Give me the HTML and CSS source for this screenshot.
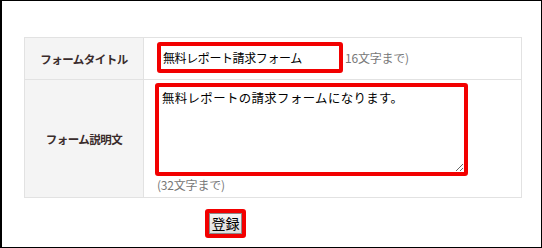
FILE: index.html
```html
<!DOCTYPE html>
<html lang="ja">
<head>
<meta charset="utf-8">
<link rel="stylesheet" href="styles.css">
</head>
<body>
<div class="frame">
  <table class="form-table">
    <tr class="row-title">
      <th class="label">フォームタイトル</th>
      <td class="field">
        <div class="inline">
          <input class="text-input" type="text" value="無料レポート請求フォーム">
          <span class="note note-inline">16文字まで)</span>
        </div>
      </td>
    </tr>
    <tr class="row-desc">
      <th class="label">フォーム説明文</th>
      <td class="field">
        <div class="desc-wrap">
          <textarea class="text-area">無料レポートの請求フォームになります。</textarea>
          <div class="note note-below">(32文字まで)</div>
        </div>
      </td>
    </tr>
  </table>
  <div class="actions">
    <button class="submit" type="button">登録</button>
  </div>
</div>
</body>
</html>
```

FILE: styles.css
```css
html, body {
  margin: 0;
  padding: 0;
  background: #fff;
}
.frame {
  width: 542px;
  height: 248px;
  box-sizing: border-box;
  border: 1px solid #000;
  border-left-width: 2px;
  padding: 36px 0 0 22px;
  font-family: "Noto Sans CJK JP", "Noto Sans", sans-serif;
}
.form-table {
  border-collapse: collapse;
  width: 498px;
  table-layout: fixed;
}
.form-table th, .form-table td {
  border: 1px solid #e2e2e2;
  padding: 0;
}
.form-table .label {
  width: 118px;
  background: #f4f4f4;
  font-size: 11.5px;
  font-weight: bold;
  color: #3a2c2c;
  text-align: center;
  vertical-align: middle;
  letter-spacing: -0.5px;
}
.row-title { height: 42px; }
.row-desc { height: 118px; }
.form-table .field {
  vertical-align: top;
  background: #fff;
}
.inline {
  display: flex;
  align-items: center;
  padding: 4px 0 0 13px;
}
.text-input {
  box-sizing: border-box;
  width: 186px;
  height: 31px;
  border: 4px solid #f20000;
  border-radius: 3px;
  padding: 0 0 0 2px;
  margin: 0;
  font-family: "Noto Sans CJK JP", sans-serif;
  font-size: 12px;
  letter-spacing: -0.4px;
  color: #000;
  outline: none;
}
.note {
  font-size: 12px;
  color: #777;
  letter-spacing: -0.2px;
}
.note-inline {
  margin-left: 2px;
}
.desc-wrap {
  padding: 3px 0 0 11px;
}
.text-area {
  display: block;
  box-sizing: border-box;
  width: 313px;
  height: 93px;
  margin: 0;
  border: 4px solid #f20000;
  border-radius: 3px;
  padding: 3px 0 0 3px;
  font-family: "Noto Sans CJK JP", sans-serif;
  font-size: 12.4px;
  letter-spacing: 0.4px;
  line-height: 16px;
  color: #000;
  resize: vertical;
  outline: none;
}
.note-below {
  margin: 0 0 0 2px;
  line-height: 18px;
}
.actions {
  padding: 11px 0 0 181px;
}
.submit {
  box-sizing: border-box;
  width: 41px;
  height: 29px;
  margin: 0;
  padding: 0;
  border: 4px solid #f20000;
  border-radius: 3px;
  background: linear-gradient(#f6f6f6, #dcdcdc);
  box-shadow: inset 0 0 0 1px #8a8a8a;
  font-family: "Noto Sans CJK JP", sans-serif;
  font-size: 14px;
  color: #000;
  line-height: 19px;
}
```
